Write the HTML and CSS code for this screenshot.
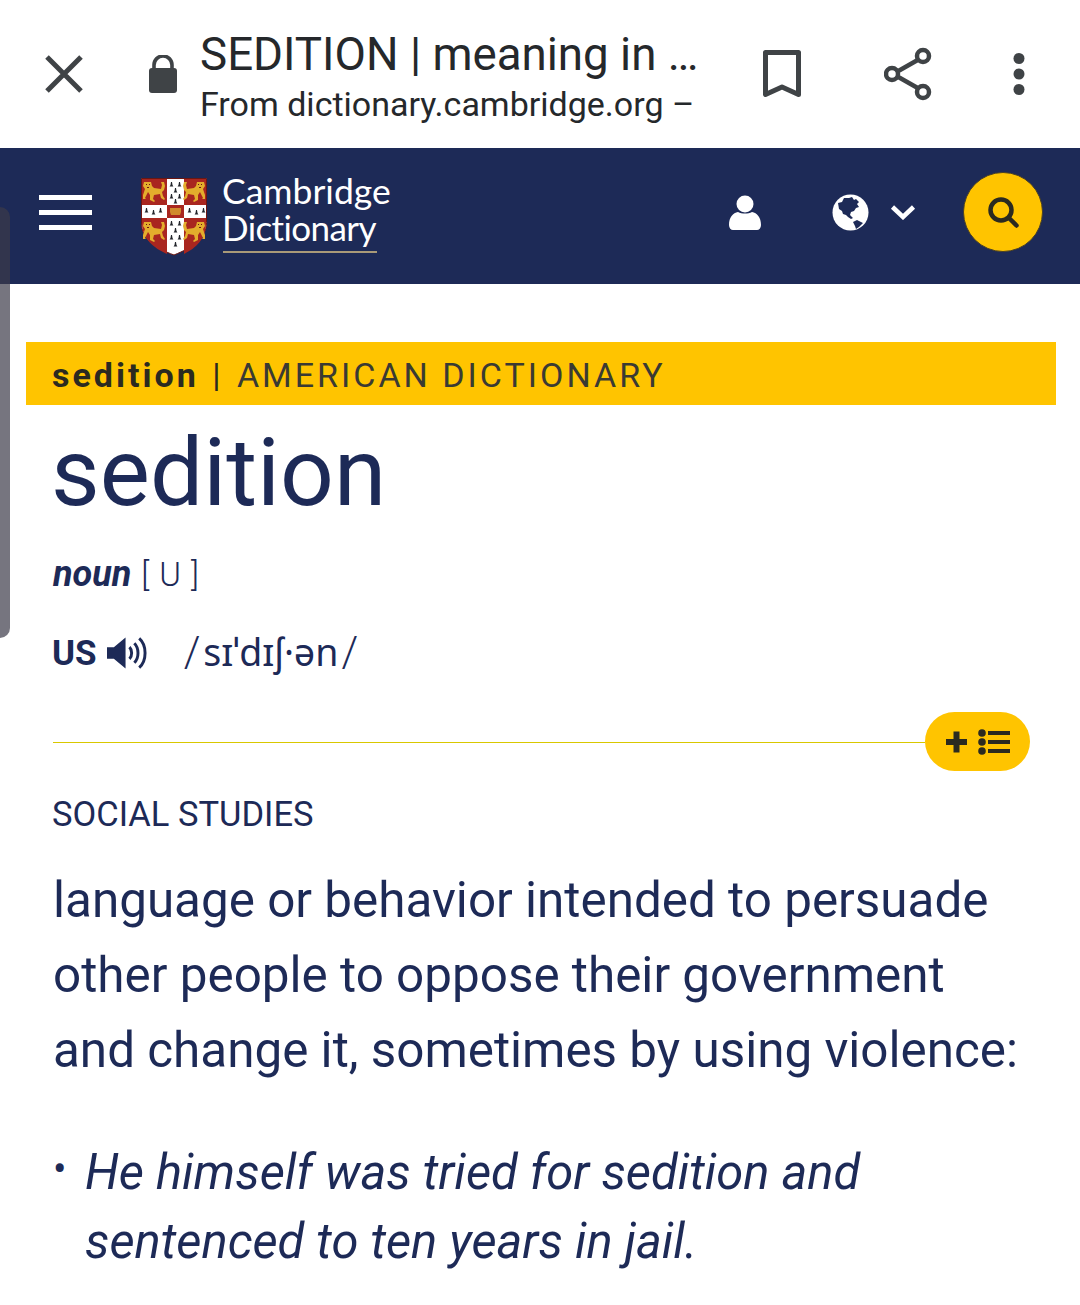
FILE: index.html
```html
<!DOCTYPE html>
<html>
	<head>
		<meta charset="UTF-8">
		<title>SEDITION | meaning in the Cambridge Dictionary</title>
		<link rel="stylesheet" href="styles.css">
	</head>
	<body>
		<div class="chrome">
			<svg class="chrome-close" width="38" height="38" viewBox="0 0 38 38"><path d="M2 2 36 36M36 2 2 36" fill="none" stroke="#3f4346" stroke-width="5"/></svg>
			<svg class="chrome-lock" width="30" height="38" viewBox="0 0 30 38"><path d="M6 15V10a9 9 0 0 1 18 0v5" fill="none" stroke="#3f4346" stroke-width="3.6"/><rect x="1" y="13" width="28" height="25" rx="3" fill="#3f4346"/></svg>
			<div class="chrome-text">
				<div class="chrome-title">SEDITION | meaning in …</div>
				<div class="chrome-from">From dictionary.cambridge.org –</div>
			</div>
			<svg class="chrome-mark" width="38" height="48" viewBox="0 0 38 48"><path d="M2.500 2.500h33v42L19 37 2.500 44.500z" fill="none" stroke="#3f4346" stroke-width="5" stroke-linejoin="round"/></svg>
			<svg class="chrome-share" width="48" height="54" viewBox="0 0 48 54"><path d="M39 10 9 27l30 17" fill="none" stroke="#3f4346" stroke-width="4.500"/><circle cx="39" cy="9" r="6" fill="#fff" stroke="#3f4346" stroke-width="4.500"/><circle cx="8" cy="27" r="6" fill="#fff" stroke="#3f4346" stroke-width="4.500"/><circle cx="39" cy="45" r="6" fill="#fff" stroke="#3f4346" stroke-width="4.500"/></svg>
			<svg class="chrome-more" width="12" height="42" viewBox="0 0 12 42"><circle cx="6" cy="5.500" r="5.500" fill="#3f4346"/><circle cx="6" cy="21" r="5.500" fill="#3f4346"/><circle cx="6" cy="36.500" r="5.500" fill="#3f4346"/></svg>
		</div>

		<div class="masthead">
			<div class="burger"><span></span><span></span><span></span></div>
			<svg class="shield" width="66" height="78" viewBox="0 0 66 78">
				<defs>
					<g id="lion">
						<path d="M2 2h7l1 4 2 2 7 1 1-4-1-3 3 0 1 4-1 4-2 2 1 4 2 3-1 1-3-2-1-4-6 1-1 4 2 2-1 1-4-2 0-5-2-3-2 4-1 2 1 1-3 0 0-4 2-6-2-3z" fill="#e3ad2c"/>
						<path d="M4 4h1v1H4zM7 4h1v1H7zM5 7h2v1H5z" fill="#6b1712"/>
					</g>
					<path id="tail" d="M1 0h1l.5 3 .9 1.600H-.4L.5 3z" fill="#22252b"/>
				</defs>
				<path d="M.5.500h65v44c0 16-14 25-32.500 32.500C14 70 .5 61 .5 45z" fill="#fff" stroke="#6b1712"/>
				<path d="M1 1h25v26H1zM43 1h22v26H43zM26 40v36C13 70 1 61 1 45v-5zM43 40h22v5c0 16-10 25-22 31z" fill="#a9261f"/>
				<path d="M26 27h17v13H26z" fill="#a9261f"/>
				<path d="M29 30h11v4l-1 3h-9l-1-3z" fill="#d08a2c"/>
				<use href="#lion" x="1" y="2"/>
				<use href="#lion" transform="matrix(-1 0 0 1 65 2)"/>
				<use href="#lion" x="1" y="42"/>
				<use href="#lion" transform="matrix(-1 0 0 1 65 42)"/>
				<use href="#tail" x="29" y="4"/><use href="#tail" x="37" y="4"/>
				<use href="#tail" x="33" y="10"/>
				<use href="#tail" x="29" y="16"/><use href="#tail" x="37" y="16"/>
				<use href="#tail" x="33" y="21"/>
				<use href="#tail" x="4" y="30"/><use href="#tail" x="11" y="32"/><use href="#tail" x="18" y="30"/>
				<use href="#tail" x="47" y="30"/><use href="#tail" x="54" y="32"/><use href="#tail" x="61" y="30"/>
				<use href="#tail" x="29" y="43"/><use href="#tail" x="37" y="43"/>
				<use href="#tail" x="33" y="50"/>
				<use href="#tail" x="29" y="57"/><use href="#tail" x="37" y="57"/>
				<use href="#tail" x="33" y="64"/>
			</svg>
			<div class="wordmark">
				<div class="wordmark-top">Cambridge</div>
				<div class="wordmark-line">Dictionary</div>
			</div>
			<svg class="user" width="32" height="35" viewBox="0 0 32 35"><circle cx="16" cy="9" r="8.500" fill="#fff"/><path d="M0 30c0-8 4-12 9-13 4 2 10 2 14 0 5 1 9 5 9 13 0 3-2 5-4 5H4c-2 0-4-2-4-5z" fill="#fff"/></svg>
			<svg class="globe" width="37" height="37" viewBox="0 0 37 37"><circle cx="18.500" cy="18.500" r="18" fill="#fff"/><path d="M6 9l4-1 2-4 5 0 3-1 2 3 2-1 3 3-2 2 2 3-3 1-2 3-3 1-1 3 3 3-2 1-3-2-2-2-3-1-1-3-3-2z" fill="#1d2a57"/><path d="M21 28l4-2 6 3-4 4-3 2-1-3z" fill="#1d2a57"/></svg>
			<svg class="chevron" width="26" height="16" viewBox="0 0 26 16"><path d="M2.500 3 13 13 23.500 3" fill="none" stroke="#fff" stroke-width="4.500"/></svg>
			<div class="search">
				<svg width="31" height="31" viewBox="0 0 31 31"><circle cx="13" cy="13" r="10.500" fill="none" stroke="#2b2a20" stroke-width="4.500"/><path d="M21 21 28.500 28.500" stroke="#2b2a20" stroke-width="4.500" stroke-linecap="round"/></svg>
			</div>
		</div>

		<div class="handle"></div>

		<div class="banner"><b>sedition</b> <span class="banner-sep">|</span> AMERICAN DICTIONARY</div>

		<div class="entry">
			<h1 class="headword">sedition</h1>
			<div class="pos"><b>noun</b> <span>[ U ]</span></div>
			<div class="pron">
				<b>US</b>
				<svg width="41" height="36" viewBox="0 0 42 36"><path d="M0 12h7l12-10v32L7 24H0z" fill="#1d2a57"/><path d="M23 12c3 3 3 9 0 12M28 8c5 5 5 15 0 20M33 3c8 7 8 23 0 30" fill="none" stroke="#1d2a57" stroke-width="3"/></svg>
				<span class="ipa"><span class="ipa-slash">/</span>sɪˈdɪʃ·ən<span class="ipa-slash">/</span></span>
			</div>
			<div class="rule">
				<div class="rule-line"></div>
				<div class="addlist">
					<svg width="64" height="26" viewBox="0 0 64 26"><path d="M7.500 2.500h6v7.500H21v6h-7.500v7.500h-6V16H0v-6h7.500z" fill="#2b2a20"/><circle cx="36" cy="4" r="3.800" fill="#2b2a20"/><circle cx="36" cy="13" r="3.800" fill="#2b2a20"/><circle cx="36" cy="22" r="3.800" fill="#2b2a20"/><path d="M42 2h22v4H42zM42 11h22v4H42zM42 20h22v4H42z" fill="#2b2a20"/></svg>
				</div>
			</div>
			<div class="domain">SOCIAL STUDIES</div>
			<p class="def">language or behavior intended to persuade other people to oppose their government and change it, sometimes by using violence:</p>
			<ul class="examples">
				<li>He himself was tried for sedition and sentenced to ten years in jail.</li>
			</ul>
		</div>
	</body>
</html>
```

FILE: styles.css
```css
body {
	margin: 0;
	background: #fff;
	font-family: Roboto, "Liberation Sans", sans-serif;
	color: #1d2a57;
	overflow: hidden;
}

.chrome {
	height: 148px;
	display: flex;
	align-items: center;
	color: #25282b;
}
.chrome svg {
	flex: none;
}
.chrome-close {
	margin-left: 45px;
}
.chrome-lock {
	margin-left: 65px;
}
.chrome-text {
	margin-left: 22px;
	width: 530px;
	padding-top: 5px;
}
.chrome-title {
	font-size: 45.7px;
	line-height: 54px;
	white-space: nowrap;
}
.chrome-from {
	margin-top: 1px;
	font-size: 34px;
	line-height: 42px;
	white-space: nowrap;
}
.chrome-mark {
	margin-left: 33px;
}
.chrome-share {
	margin-left: 83px;
}
.chrome-more {
	margin-left: 81px;
}

.masthead {
	height: 128px;
	padding-bottom: 8px;
	background: #1d2a57;
	display: flex;
	align-items: center;
	color: #fff;
}
.burger {
	margin-left: 39px;
	width: 53px;
}
.burger span {
	display: block;
	height: 5px;
	background: #fff;
	margin-bottom: 10px;
}
.burger span:last-child {
	margin-bottom: 0;
}
.shield {
	margin-left: 49px;
	margin-top: 9px;
	flex: none;
}
.wordmark {
	margin-left: 16px;
	margin-top: 2px;
	font-family: Lato, sans-serif;
	font-size: 35px;
	line-height: 36px;
	width: 154px;
}
.wordmark-top {
	font-size: 35.5px;
	margin-left: -1px;
	white-space: nowrap;
}
.wordmark-line {
	letter-spacing: -0.6px;
	text-indent: -1px;
	border-bottom: 2px solid #a99a78;
	padding-bottom: 6px;
}
.user {
	margin-left: 352px;
}
.globe {
	margin-left: 71px;
}
.chevron {
	margin-left: 21px;
}
.search {
	margin-left: 47px;
	width: 80px;
	height: 80px;
	box-sizing: border-box;
	border: 1px solid #4a4126;
	border-radius: 50%;
	background: #ffc400;
	display: flex;
	align-items: center;
	justify-content: center;
}

.handle {
	position: absolute;
	left: -10px;
	top: 207px;
	width: 20px;
	height: 431px;
	border-radius: 0 10px 10px 0;
	background: rgba(60, 58, 72, .7);
}

.banner {
	margin: 58px 24px 0 26px;
	height: 63px;
	padding-left: 26px;
	background: #ffc400;
	font-size: 34px;
	line-height: 66px;
	letter-spacing: 3px;
	color: #3a3a33;
}
.banner b {
	color: #2b2a20;
}
.banner-sep {
	color: #2b2a20;
	margin: 0 2px;
}

.entry {
	padding: 0 50px 0 53px;
}
.headword {
	margin: 14px 0 0 -2px;
	font-size: 94.5px;
	line-height: 108px;
	font-weight: 400;
}
.pos {
	margin-top: 26px;
	font-size: 36px;
	line-height: 42px;
}
.pos b {
	font-style: italic;
}
.pos span {
	font-weight: 300;
	font-size: 33px;
	word-spacing: 2px;
	margin-left: 1px;
}
.pron {
	margin: 35px 0 0 -1px;
	display: flex;
	align-items: center;
	height: 44px;
	font-size: 35px;
}
.pron svg {
	margin-left: 10px;
}
.ipa {
	margin: 0 0 4px 33px;
	font-size: 37.5px;
	font-family: "Noto Sans", Roboto, sans-serif;
}
.ipa-slash {
	font-family: Roboto, sans-serif;
	font-weight: 300;
	font-size: 42px;
	margin: 0 3px;
}

.rule {
	margin-top: 37px;
	display: flex;
	align-items: center;
}
.rule-line {
	flex: 1;
	height: 1px;
	margin-top: 1px;
	background: #d9c800;
}
.addlist {
	width: 105px;
	height: 59px;
	border-radius: 30px;
	background: #ffc400;
	display: flex;
	align-items: center;
	justify-content: center;
}
.domain {
	margin-top: 22px;
	margin-left: -1px;
	font-size: 34.5px;
	line-height: 42px;
}
.def {
	margin: 28px 0 0;
	font-size: 49.4px;
	line-height: 75px;
}
.examples {
	margin: 51px 0 0;
	padding: 0;
	list-style: none;
	font-size: 48.9px;
	line-height: 68.6px;
	font-style: italic;
}
.examples li {
	display: flex;
}
.examples li::before {
	content: "•";
	flex: none;
	width: 32px;
	font-size: 40px;
	line-height: 62px;
	font-style: normal;
}
```
